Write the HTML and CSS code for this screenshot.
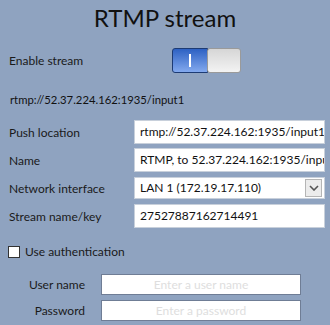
FILE: index.html
```html
<!DOCTYPE html>
<html lang="en">
  <head>
    <meta charset="UTF-8" />
    <title>RTMP stream</title>
    <link rel="stylesheet" href="styles.css">
  </head>
  <body>
    <h1 class="title">RTMP stream</h1>

    <div class="toggle-row">
      <span class="label">Enable stream</span>
      <div class="toggle">
        <span class="toggle-on"><i class="toggle-bar"></i></span>
        <span class="toggle-off"></span>
      </div>
    </div>

    <div class="url">rtmp://52.37.224.162:1935/input1</div>

    <div class="form">
      <label class="label">Push location</label>
      <div class="field">rtmp://52.37.224.162:1935/input1</div>

      <label class="label">Name</label>
      <div class="field">RTMP, to 52.37.224.162:1935/input1</div>

      <label class="label">Network interface</label>
      <div class="field select">
        <span>LAN 1 (172.19.17.110)</span>
        <span class="select-btn">
          <svg width="10" height="6" viewBox="0 0 10 6">
            <path d="M1 1 L5 5 L9 1" fill="none" stroke="#555" stroke-width="1.6" />
          </svg>
        </span>
      </div>

      <label class="label">Stream name/key</label>
      <div class="field">27527887162714491</div>
    </div>

    <div class="check-row">
      <span class="checkbox"></span>
      <span class="label">Use authentication</span>
    </div>

    <div class="auth">
      <label class="label">User name</label>
      <div class="field disabled">Enter a user name</div>

      <label class="label">Password</label>
      <div class="field disabled">Enter a password</div>
    </div>
  </body>
</html>
```

FILE: styles.css
```css
body {
  margin: 0;
  background-color: #8fa3c0;
  font-family: Lato, "Open Sans", sans-serif;
  color: #111;
}
.title {
  margin: 0;
  padding-top: 1px;
  font-size: 24px;
  line-height: 33px;
  font-weight: normal;
  text-align: center;
}
.label {
  font-size: 12px;
  color: #1a1a1a;
  white-space: nowrap;
}
.toggle-row {
  display: flex;
  align-items: center;
  margin-top: 14px;
  padding-left: 9px;
  height: 25px;
}
.toggle {
  display: flex;
  margin-left: auto;
  margin-right: 88px;
  width: 70px;
  height: 25px;
}
.toggle-on {
  display: flex;
  justify-content: center;
  align-items: center;
  width: 36px;
  box-sizing: border-box;
  border: 1px solid #1d3b74;
  border-radius: 3px 0 0 3px;
  background: linear-gradient(#2d61c3, #83a9ee);
}
.toggle-bar {
  display: block;
  width: 2px;
  height: 13px;
  background-color: #fff;
}
.toggle-off {
  width: 34px;
  box-sizing: border-box;
  border: 1px solid #9a9a9a;
  border-radius: 3px;
  margin-left: -1px;
  background: linear-gradient(#d6d6d6, #f3f3f3);
}
.url {
  margin-top: 19px;
  padding-left: 10px;
  font-size: 11.3px;
  line-height: 16px;
}
.form {
  display: grid;
  grid-template-columns: 125px 191px;
  row-gap: 4px;
  margin-top: 12px;
  padding-left: 9px;
  align-items: center;
}
.field {
  box-sizing: border-box;
  height: 24px;
  padding: 0 5px;
  background-color: #fff;
  border: 1px solid #c8d0db;
  font-size: 12px;
  line-height: 22px;
  white-space: nowrap;
  overflow: hidden;
}
.select {
  display: flex;
  justify-content: space-between;
  align-items: center;
  height: 22px;
  margin: 1px 0;
  padding-right: 2px;
}
.select-btn {
  display: flex;
  justify-content: center;
  align-items: center;
  width: 15px;
  height: 16px;
  background-color: #ececec;
  border: 1px solid #b5b5b5;
}
.check-row {
  display: flex;
  align-items: center;
  gap: 5px;
  margin-top: 16px;
  padding-left: 8px;
}
.checkbox {
  width: 12px;
  height: 12px;
  box-sizing: border-box;
  background-color: #fff;
  border: 1px solid #333;
}
.auth {
  display: grid;
  grid-template-columns: 77px 200px;
  column-gap: 16px;
  row-gap: 5px;
  margin-top: 15px;
  padding-left: 8px;
  align-items: center;
}
.auth .label {
  text-align: right;
}
.disabled {
  height: 21px;
  line-height: 19px;
  border-color: #6f7d95;
  color: #dedede;
  text-align: center;
}
```
